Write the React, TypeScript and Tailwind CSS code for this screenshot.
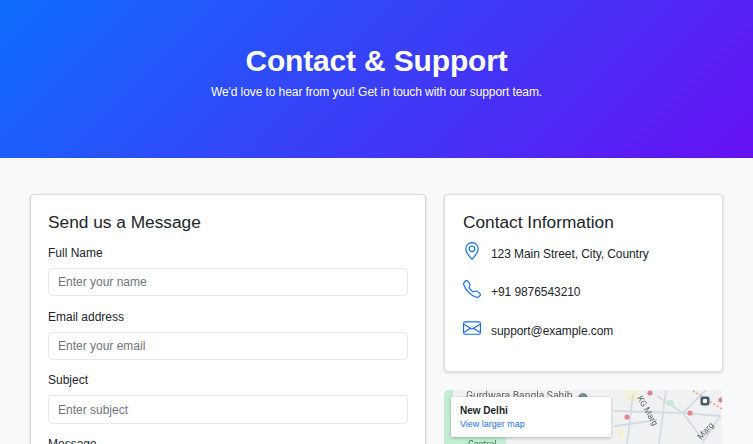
import { BsEnvelope, BsGeoAlt, BsTelephone } from "react-icons/bs";

const fields = [
  { label: "Full Name", placeholder: "Enter your name" },
  { label: "Email address", placeholder: "Enter your email" },
  { label: "Subject", placeholder: "Enter subject" },
];

const contacts = [
  { icon: BsGeoAlt, text: "123 Main Street, City, Country" },
  { icon: BsTelephone, text: "+91 9876543210" },
  { icon: BsEnvelope, text: "support@example.com" },
];

function MapPicture() {
  return (
    <svg viewBox="0 0 278 54" className="block h-[54px] w-[278px] blur-[0.35px]">
      <rect width="278" height="54" fill="#f0f1f3" />
      <path d="M0 0H9L7 46H62V54H0Z" fill="#c3ecd4" />
      <path d="M180 0H196L192 14H184Z" fill="#f7f0d8" />
      <path d="M172 40L180 39L181 48L175 49Z" fill="#f7f0d8" />
      <ellipse cx="226" cy="13" rx="4" ry="3" fill="#c3ecd4" />
      <g stroke="#d3dce4" strokeWidth="1.8" fill="none">
        <path d="M170 21L239 23L276 26" />
        <path d="M213 6L239 23L259 50" />
        <path d="M276 26L259 52" />
        <path d="M189 4L183 54" />
        <path d="M222 0L215 54" />
        <path d="M239 23L262 0" />
        <path d="M170 36L213 30" />
      </g>
      <path d="M249 1L278 19" stroke="#ee9a94" strokeWidth="1.5" strokeDasharray="2 2" fill="none" />
      <text x="22" y="9" fontSize="10.3" fill="#5f6368" fontFamily="Roboto, sans-serif">Gurdwara Bangla Sahib</text>
      <text x="24" y="57" fontSize="9" fill="#3c7d5a" fontFamily="Roboto, sans-serif">Central</text>
      <text x="193" y="8" fontSize="8.5" fill="#5f6368" fontFamily="Roboto, sans-serif" transform="rotate(60 193 8)">KG Marg</text>
      <text x="257" y="50" fontSize="8.5" fill="#5f6368" fontFamily="Roboto, sans-serif" transform="rotate(-48 257 50)">Marg</text>
      <circle cx="139" cy="8" r="5" fill="#78909c" />
      <circle cx="206" cy="3" r="2.6" fill="#e8838a" />
      <circle cx="183" cy="27" r="2.6" fill="#e8838a" />
      <circle cx="246" cy="23" r="2.6" fill="#e8838a" />
      <circle cx="277" cy="10" r="2.6" fill="#e8838a" />
      <rect x="256.500" y="6.500" width="9" height="9" rx="2" fill="#4a5d6c" />
      <rect x="259" y="9" width="4" height="4" rx="1" fill="#ffffff" />
    </svg>
  );
}

export default function App() {
  return (
    <div className="h-[444px] overflow-hidden bg-[#f8f9fa] font-['Liberation_Sans',Arial,sans-serif] text-[#212529]">
      <header className="flex h-[158px] flex-col items-center bg-[linear-gradient(135deg,#0d6efd,#6610f2)] pt-[42px] text-white">
        <h1 className="text-[30px] leading-[38px] font-bold tracking-[-0.17px]">Contact &amp; Support</h1>
        <p className="mt-[3px] text-[12px] leading-[18px] tracking-[-0.08px]">We'd love to hear from you! Get in touch with our support team.</p>
      </header>

      <main className="flex items-start gap-[18px] px-[30px] pt-[35.7px]">
        <section className="w-[396px] shrink-0 rounded-[4px] border border-[#dcdcdc] bg-white p-[17px] shadow-[0_1px_3px_rgba(0,0,0,0.15)]">
          <h2 className="mb-[11.3px] text-[17.3px] leading-[21px]">Send us a Message</h2>
          {fields.map((field) => (
            <div key={field.label} className="mb-[11.2px]">
              <label className="mb-[6px] block text-[12px] leading-[18px]">{field.label}</label>
              <input
                placeholder={field.placeholder}
                className="block h-[28.5px] w-[359.5px] rounded-[4px] border border-[#e6e8ea] bg-white px-[9px] text-[12px] placeholder:text-[#6c757d]"
              />
            </div>
          ))}
          <label className="mb-[6px] block text-[12px] leading-[18px]">Message</label>
          <textarea className="block h-[80px] w-[359.5px] rounded-[4px] border border-[#e6e8ea]" />
        </section>

        <aside className="flex min-w-0 flex-1 flex-col gap-[18px]">
          <section className="h-[178px] rounded-[4px] border border-[#dcdcdc] bg-white p-[17px] pl-[18px] shadow-[0_1px_3px_rgba(0,0,0,0.15)]">
            <h2 className="mb-[9.3px] text-[17.3px] leading-[21px]">Contact Information</h2>
            <div className="flex flex-col gap-[12.5px]">
              {contacts.map(({ icon: Icon, text }) => (
                <div key={text} className="flex h-[26px] items-start gap-[10px]">
                  <Icon className="size-[18px] shrink-0 text-[#0d6efd]" />
                  <span className="mt-[3px] text-[12px] leading-[18px] tracking-[-0.07px]">{text}</span>
                </div>
              ))}
            </div>
          </section>

          <section className="relative h-[54.3px] overflow-hidden rounded-t-[5px]">
            <MapPicture />
            <div className="absolute top-[7.3px] left-[7px] h-[40px] w-[160px] bg-white px-[9px] pt-[7.5px] shadow-[0_1px_3px_rgba(0,0,0,0.25)]">
              <p className="text-[10px] leading-[14px] font-bold">New Delhi</p>
              <p className="text-[9px] leading-[13px] text-[#1a73e8]">View larger map</p>
            </div>
          </section>
        </aside>
      </main>
    </div>
  );
}
